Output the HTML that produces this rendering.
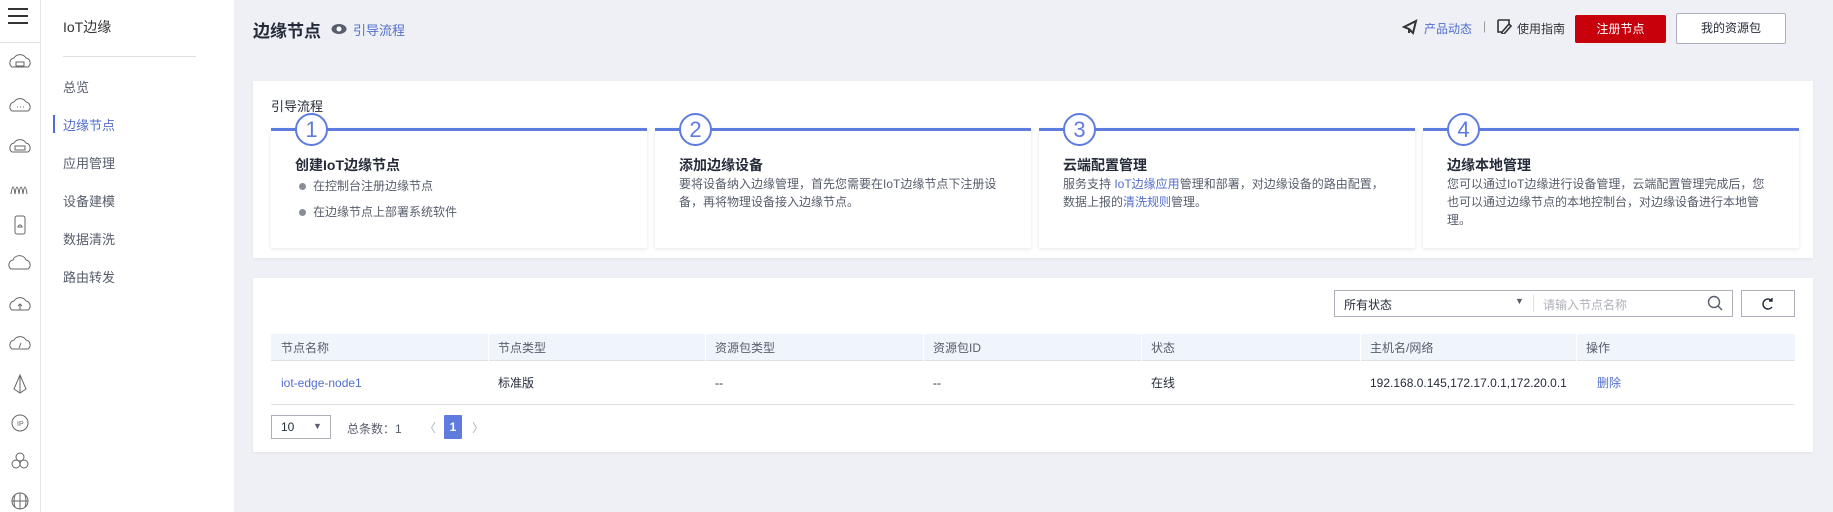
<!DOCTYPE html>
<html><head><meta charset="utf-8"><style>
*{margin:0;padding:0;box-sizing:border-box}
body{width:1833px;height:512px;overflow:hidden;background:#eef0f5;font-family:"Liberation Sans","Noto Sans CJK SC",sans-serif;font-size:12px;color:#252b3a;position:relative}
.a{position:absolute}
.ib{left:0;top:0;width:41px;height:512px;background:#fff;border-right:1px solid #e5e7ec}
.sb{left:41px;top:0;width:193px;height:512px;background:#fff}
.mi{left:63px;font-size:13px;color:#575d6c}
.blue{color:#526ecc}
.card{background:#fff;box-shadow:0 1px 3px rgba(0,0,0,.06)}
.box{top:128px;width:376px;height:120px;background:#fff;box-shadow:0 1px 4px rgba(0,0,0,.1);border-top:3px solid #5e7ce0}
.circ{top:-18px;width:33px;height:33px;border:2px solid #5e7ce0;border-radius:50%;background:#fff;text-align:center;line-height:29px;font-size:22px;color:#5e7ce0;left:24px}
.bt{left:24px;top:24px;font-size:14px;font-weight:bold;color:#252b3a}
.bd{left:24px;top:44px;width:330px;font-size:12px;line-height:18px;color:#575d6c}
.th{top:334px;height:27px;background:#f0f4fb;border-bottom:1px solid #dfe1e6}
.col{font-size:12px;color:#575d6c}
.r{top:375px;line-height:16px;height:16px}
.h{top:340px;line-height:16px}
</style></head><body>
<div class="a ib">
<div class="a" style="left:8px;top:8px;width:20px;height:16px;border-top:2px solid #333;border-bottom:2px solid #333"></div>
<div class="a" style="left:8px;top:15px;width:20px;height:2px;background:#333"></div>
<div class="a" style="left:0;top:42px;width:41px;height:1px;background:#dfe1e6"></div>
<svg class="a" style="left:0;top:52px" width="41" height="460" fill="none" stroke="#666" stroke-width="1">
<g transform="translate(20,11)"><path d="M-8 4a5 5 0 0 1 2-9a7 7 0 0 1 12 0a5 5 0 0 1 2 9z"/><rect x="-4" y="-1" width="8" height="4"/></g>
<g transform="translate(20,55)"><path d="M-8 4a5 5 0 0 1 2-9a7 7 0 0 1 12 0a5 5 0 0 1 2 9z"/><path d="M-3 0h1M0 0h1M3 0h1"/></g>
<g transform="translate(20,96)"><path d="M-8 4a5 5 0 0 1 2-9a7 7 0 0 1 12 0a5 5 0 0 1 2 9z"/><rect x="-5" y="-2" width="10" height="4"/></g>
<g transform="translate(20,135)"><path d="M-9 7q2-14 4 0q2-14 4 0q2-14 4 0q2-14 4 0"/></g>
<g transform="translate(20,173)"><rect x="-5" y="-9" width="10" height="18" rx="2"/><path d="M-2 2a2 2 0 0 1 4 0z"/></g>
<g transform="translate(20,213)"><path d="M-9 4a5 5 0 0 1 2-9a7 7 0 0 1 13 0a5 5 0 0 1 2 9z"/></g>
<g transform="translate(20,254)"><path d="M-8 4a5 5 0 0 1 2-9a7 7 0 0 1 12 0a5 5 0 0 1 2 9z"/><path d="M0 4v-6M-2 0l2-2l2 2"/></g>
<g transform="translate(20,293)"><path d="M-8 4a5 5 0 0 1 2-9a7 7 0 0 1 12 0a5 5 0 0 1 2 9z"/><path d="M-1 3l2-5"/></g>
<g transform="translate(20,332)"><path d="M0-9l6 14l-6 4l-6-4z M0-9v18"/></g>
<g transform="translate(20,371)"><circle r="8"/><text x="-3" y="3" font-size="7" fill="#666" stroke="none">IP</text></g>
<g transform="translate(20,409)"><circle cy="-4" r="4"/><circle cx="-4" cy="3" r="4"/><circle cx="4" cy="3" r="4"/></g>
<g transform="translate(20,449)"><circle r="8"/><path d="M-8 0h16M0-8v16M-5-6q-2 6 0 12M5-6q2 6 0 12"/></g>
</svg>
</div>
<div class="a sb">
<div class="a" style="left:22px;top:17px;font-size:14px;color:#333">IoT边缘</div>
<div class="a" style="left:22px;top:56px;width:133px;height:1px;background:#dfe1e6"></div>
</div>
<div class="a" style="left:53px;top:115px;width:2px;height:18px;background:#526ecc"></div>
<div class="a mi" style="top:77px">总览</div>
<div class="a mi blue" style="top:115px">边缘节点</div>
<div class="a mi" style="top:153px">应用管理</div>
<div class="a mi" style="top:191px">设备建模</div>
<div class="a mi" style="top:229px">数据清洗</div>
<div class="a mi" style="top:267px">路由转发</div>

<div class="a" style="left:253px;top:17px;font-size:17px;font-weight:bold;color:#252b3a">边缘节点</div>
<svg class="a" style="left:331px;top:23px" width="16" height="12"><ellipse cx="8" cy="6" rx="7.5" ry="5" fill="#575d6c"/><circle cx="8" cy="6" r="2.5" fill="#fff"/></svg>
<div class="a blue" style="left:353px;top:20px;font-size:13px">引导流程</div>

<svg class="a" style="left:1402px;top:19px" width="16" height="16" fill="none" stroke="#333" stroke-width="2"><path d="M2 8l12-6l-3 12l-4-4z M7 10v4"/></svg>
<div class="a blue" style="left:1424px;top:20px;font-size:12px">产品动态</div>
<div class="a" style="left:1483px;top:19px;color:#999">|</div>
<svg class="a" style="left:1496px;top:18px" width="16" height="16" fill="none" stroke="#333" stroke-width="1.6"><path d="M2 2h11v5M2 2v12h5M6 14l7-8l2 2l-7 8h-2z"/></svg>
<div class="a" style="left:1517px;top:20px;font-size:12px;color:#333">使用指南</div>
<div class="a" style="left:1575px;top:15px;width:91px;height:28px;background:#c7000b;border-radius:2px;color:#fff;text-align:center;line-height:28px;font-size:12px">注册节点</div>
<div class="a" style="left:1676px;top:13px;width:110px;height:31px;background:#fff;border:1px solid #adb0b8;border-radius:2px;color:#252b3a;text-align:center;line-height:29px;font-size:12px">我的资源包</div>

<div class="a card" style="left:253px;top:81px;width:1560px;height:177px"></div>
<div class="a" style="left:271px;top:96px;font-size:13px;color:#252b3a">引导流程</div>
<div class="a box" style="left:271px"><div class="a circ">1</div><div class="a bt">创建IoT边缘节点</div>
<div class="a bd" style="top:42px;left:28px;line-height:26px">
<div><span style="display:inline-block;width:7px;height:7px;border-radius:50%;background:#8a8e99;margin-right:7px"></span>在控制台注册边缘节点</div>
<div><span style="display:inline-block;width:7px;height:7px;border-radius:50%;background:#8a8e99;margin-right:7px"></span>在边缘节点上部署系统软件</div></div></div>
<div class="a box" style="left:655px"><div class="a circ">2</div><div class="a bt">添加边缘设备</div><div class="a bd">要将设备纳入边缘管理，首先您需要在IoT边缘节点下注册设备，再将物理设备接入边缘节点。</div></div>
<div class="a box" style="left:1039px"><div class="a circ">3</div><div class="a bt">云端配置管理</div><div class="a bd">服务支持 <span class="blue">IoT边缘应用</span>管理和部署，对边缘设备的路由配置，数据上报的<span class="blue">清洗规则</span>管理。</div></div>
<div class="a box" style="left:1423px"><div class="a circ">4</div><div class="a bt">边缘本地管理</div><div class="a bd" style="width:321px">您可以通过IoT边缘进行设备管理，云端配置管理完成后，您也可以通过边缘节点的本地控制台，对边缘设备进行本地管理。</div></div>

<div class="a card" style="left:253px;top:278px;width:1560px;height:174px"></div>
<div class="a" style="left:1334px;top:290px;width:399px;height:27px;border:1px solid #adb0b8;background:#fff"></div>
<div class="a" style="left:1344px;top:296px;font-size:12px;color:#252b3a">所有状态</div>
<div class="a" style="left:1515px;top:296px;font-size:9px;color:#575d6c">▼</div>
<div class="a" style="left:1533px;top:295px;width:1px;height:17px;background:#dfe1e6"></div>
<div class="a" style="left:1543px;top:296px;font-size:12px;color:#adb0b8">请输入节点名称</div>
<svg class="a" style="left:1707px;top:295px" width="16" height="17" fill="none" stroke="#575d6c" stroke-width="1.4"><circle cx="7" cy="7" r="5.5"/><path d="M11 11l4 4"/></svg>
<div class="a" style="left:1741px;top:290px;width:54px;height:27px;border:1px solid #adb0b8;background:#fff"></div>
<svg class="a" style="left:1761px;top:297px" width="14" height="14" fill="none" stroke="#252b3a" stroke-width="1.4"><path d="M11 4a5 5 0 1 0 0 6M11 1v3h-3"/></svg>

<div class="a th" style="left:271px;width:1524px"></div>
<div class="a" style="left:271px;top:404px;width:1524px;height:1px;background:#dfe1e6"></div>
<div class="a" style="left:488px;top:334px;width:1px;height:27px;background:#fff"></div>
<div class="a" style="left:705px;top:334px;width:1px;height:27px;background:#fff"></div>
<div class="a" style="left:923px;top:334px;width:1px;height:27px;background:#fff"></div>
<div class="a" style="left:1141px;top:334px;width:1px;height:27px;background:#fff"></div>
<div class="a" style="left:1360px;top:334px;width:1px;height:27px;background:#fff"></div>
<div class="a" style="left:1576px;top:334px;width:1px;height:27px;background:#fff"></div>
<div class="a col h" style="left:281px">节点名称</div>
<div class="a col h" style="left:498px">节点类型</div>
<div class="a col h" style="left:715px">资源包类型</div>
<div class="a col h" style="left:933px">资源包ID</div>
<div class="a col h" style="left:1151px">状态</div>
<div class="a col h" style="left:1370px">主机名/网络</div>
<div class="a col h" style="left:1586px">操作</div>
<div class="a blue r" style="left:281px">iot-edge-node1</div>
<div class="a r" style="left:498px">标准版</div>
<div class="a r" style="left:715px">--</div>
<div class="a r" style="left:933px">--</div>
<div class="a r" style="left:1151px">在线</div>
<div class="a r" style="left:1370px">192.168.0.145,172.17.0.1,172.20.0.1</div>
<div class="a blue r" style="left:1597px">删除</div>

<div class="a" style="left:271px;top:415px;width:60px;height:24px;border:1px solid #adb0b8;background:#fff"></div>
<div class="a" style="left:281px;top:420px">10</div>
<div class="a" style="left:313px;top:421px;font-size:9px;color:#575d6c">▼</div>
<div class="a" style="left:347px;top:420px;color:#575d6c">总条数：1</div>
<div class="a" style="left:424px;top:419px;color:#adb0b8">〈</div>
<div class="a" style="left:444px;top:415px;width:18px;height:24px;background:#5e7ce0;color:#fff;text-align:center;line-height:24px;font-weight:bold;border-radius:1px">1</div>
<div class="a" style="left:472px;top:419px;color:#adb0b8">〉</div>
</body></html>
